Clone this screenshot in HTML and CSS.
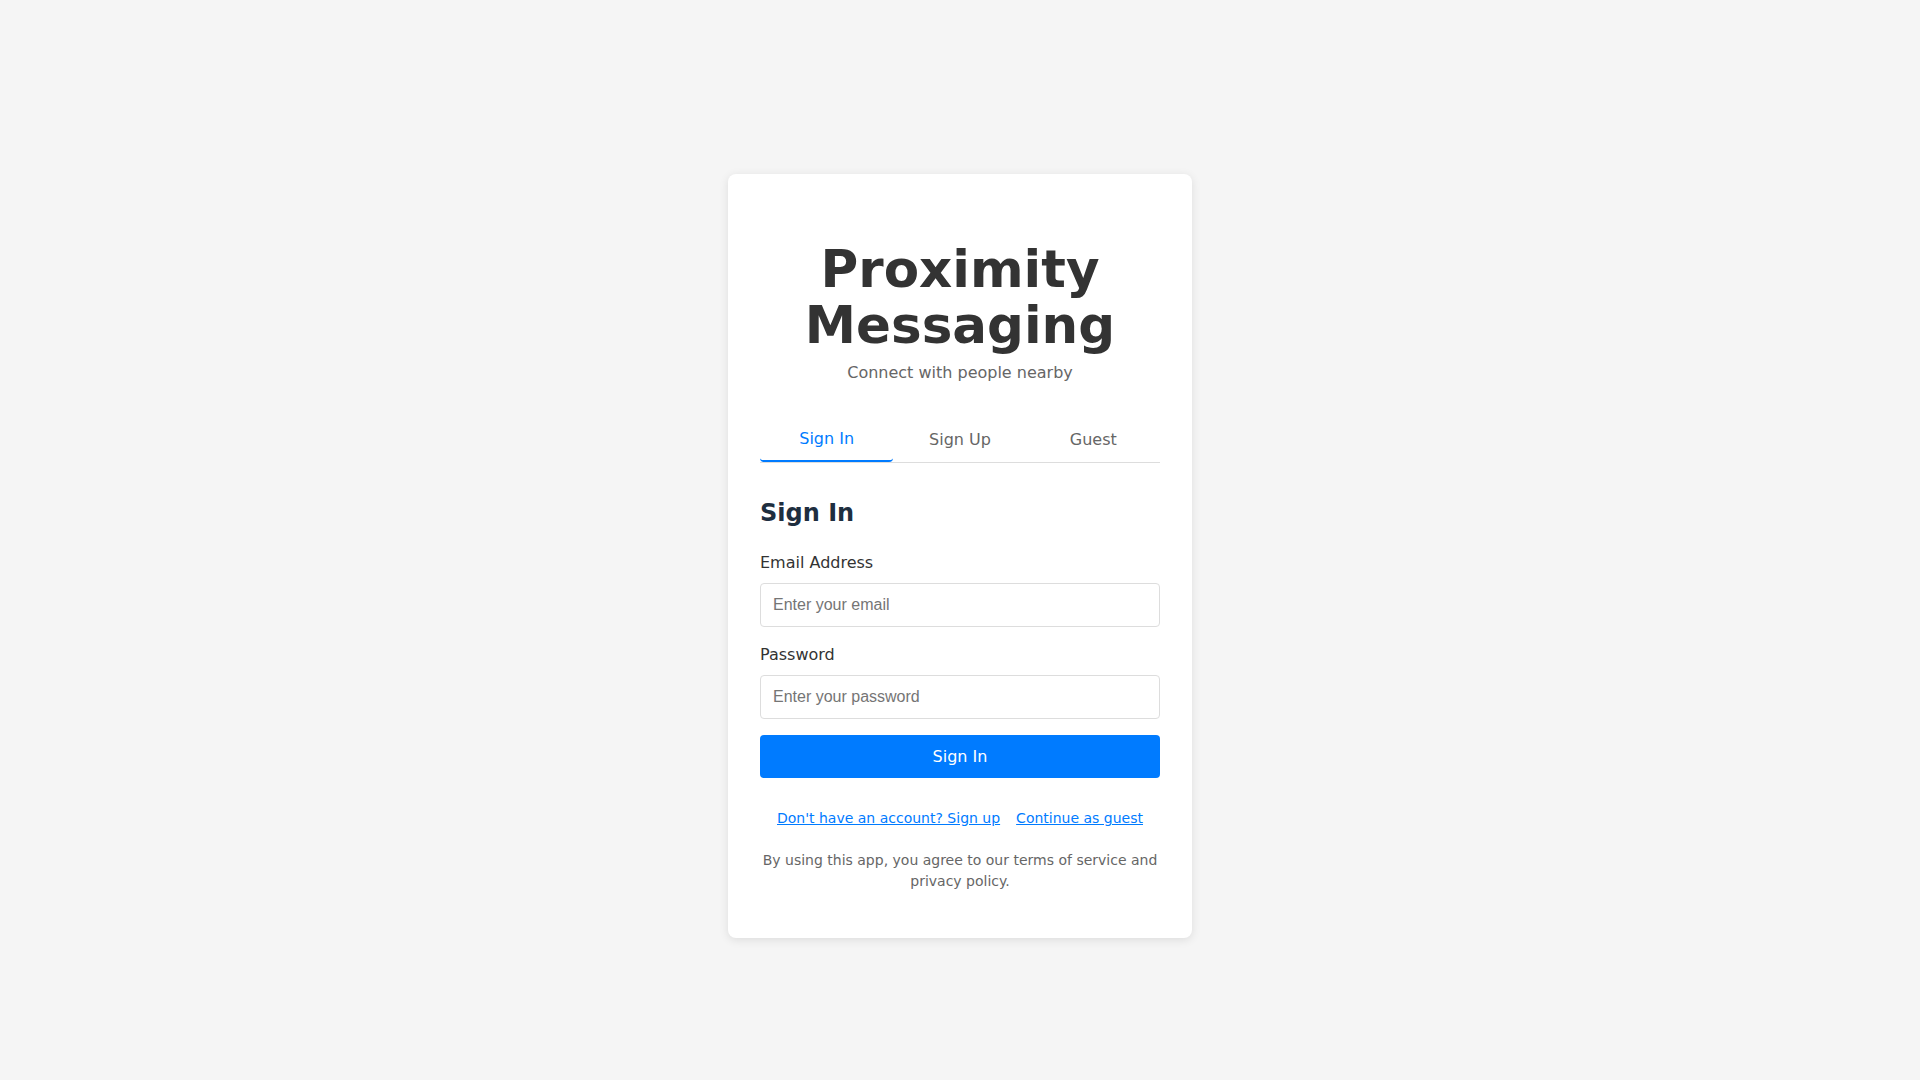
FILE: index.html
```html
<!DOCTYPE html>
<html lang="en">
<head>
<meta charset="utf-8">
<title>Proximity Messaging</title>
<link rel="stylesheet" href="styles.css">
</head>
<body>
<div class="card">
  <header class="header">
    <h1 class="title">Proximity Messaging</h1>
    <p class="subtitle">Connect with people nearby</p>
  </header>
  <nav class="tabs">
    <button class="tab active">Sign In</button>
    <button class="tab">Sign Up</button>
    <button class="tab">Guest</button>
  </nav>
  <form class="form">
    <h2 class="form-title">Sign In</h2>
    <div class="group">
      <label class="label" for="email">Email Address</label>
      <input class="input" id="email" type="email" placeholder="Enter your email">
    </div>
    <div class="group">
      <label class="label" for="password">Password</label>
      <input class="input" id="password" type="password" placeholder="Enter your password">
    </div>
    <button class="submit" type="button">Sign In</button>
  </form>
  <div class="links">
    <a class="link" href="#">Don't have an account? Sign up</a>
    <a class="link" href="#">Continue as guest</a>
  </div>
  <p class="terms">By using this app, you agree to our terms of service and privacy policy.</p>
</div>
</body>
</html>
```
FILE: styles.css
```css
* { box-sizing: border-box; }
html, body { margin: 0; }
body {
  background: #f5f5f5;
  font-family: "DejaVu Sans", sans-serif;
  display: flex;
  justify-content: center;
  align-items: flex-start;
  padding-top: 174px;
  min-height: 100vh;
}
.card {
  width: 464px;
  background: #fff;
  border-radius: 8px;
  box-shadow: 0 2px 10px rgba(0, 0, 0, 0.1);
  padding: 32px;
}
.header { text-align: center; }
.title {
  margin: 35px 0 8px;
  font-size: 51.5px;
  line-height: 56px;
  font-weight: bold;
  color: #333;
}
.subtitle {
  margin: 0;
  font-size: 16px;
  line-height: 1.5;
  color: #666;
}
.tabs {
  display: flex;
  margin-top: 34px;
  border-bottom: 1px solid #ddd;
}
.tab {
  flex: 1;
  background: none;
  border: none;
  border-bottom: 2px solid transparent;
  border-radius: 4px;
  padding: 11px 0 11px;
  font-family: "DejaVu Sans", sans-serif;
  font-size: 16px;
  color: #666;
  cursor: pointer;
}
.tab.active {
  color: #007bff;
  border-bottom-color: #007bff;
  padding-bottom: 12px;
  padding-top: 10px;
}
.form { margin-top: 36px; }
.form-title {
  margin: 0 0 23px;
  font-size: 24px;
  line-height: 1.2;
  color: #1e2e3f;
}
.group { margin-bottom: 16px; }
.label {
  display: block;
  margin-bottom: 8px;
  font-size: 16px;
  line-height: 1.5;
  color: #333;
}
.input {
  display: block;
  width: 100%;
  padding: 12px;
  border: 1px solid #ddd;
  border-radius: 4px;
  font-family: "Liberation Sans", Arial, sans-serif;
  font-size: 16px;
  color: #333;
  background: #fff;
}
.input::placeholder { color: #757575; }
.submit {
  display: block;
  width: 100%;
  margin-top: 0;
  padding: 12px;
  border: none;
  border-radius: 4px;
  background: #007bff;
  color: #fff;
  font-family: "DejaVu Sans", sans-serif;
  font-size: 16px;
  cursor: pointer;
}
.links {
  display: flex;
  justify-content: center;
  gap: 16px;
  margin-top: 30px;
  font-size: 14px;
  line-height: 1.5;
}
.link { color: #007bff; text-decoration: underline; }
.terms {
  margin: 21px 0 14px;
  text-align: center;
  font-size: 14px;
  line-height: 1.5;
  color: #666;
}
```
